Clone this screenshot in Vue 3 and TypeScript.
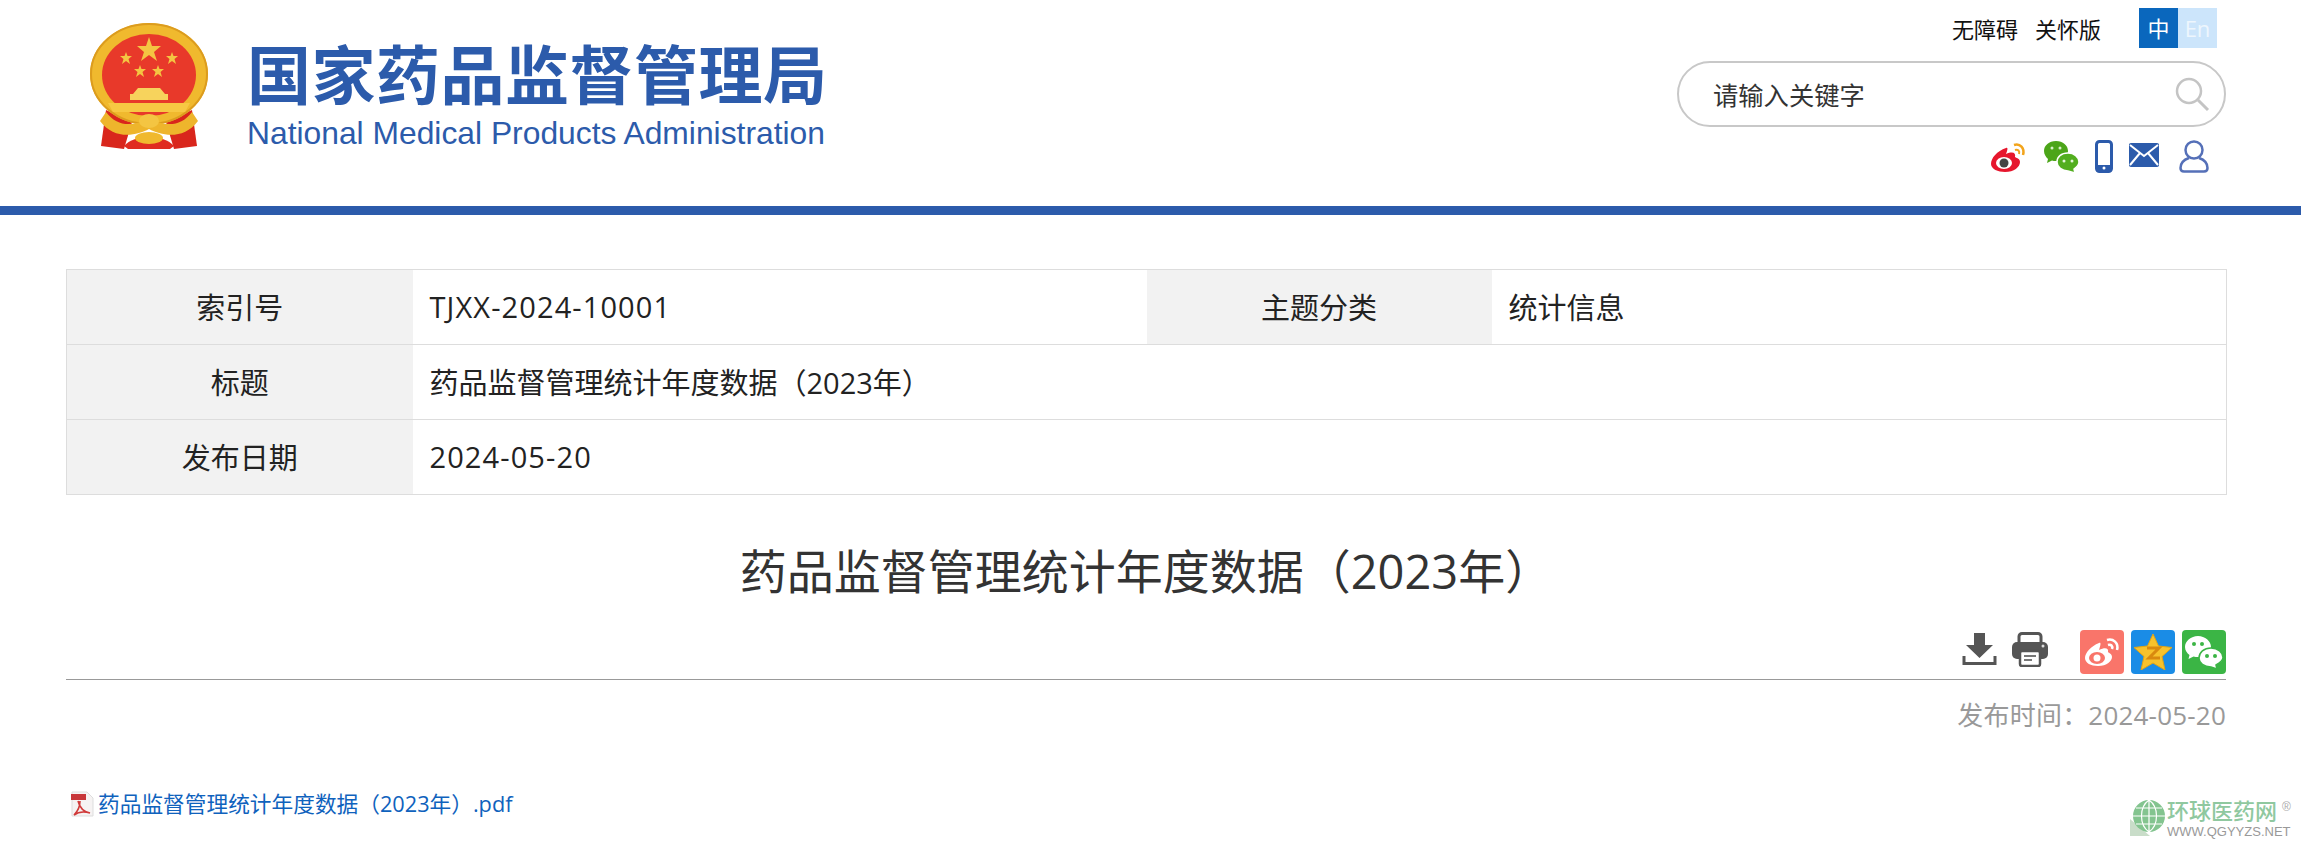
<script setup lang="ts">
const meta = [
  { label: '索引号', value: 'TJXX-2024-10001', label2: '主题分类', value2: '统计信息', latin: true },
  { label: '标题', value: '药品监督管理统计年度数据（2023年）' },
  { label: '发布日期', value: '2024-05-20', latin: true },
];
const title = '药品监督管理统计年度数据（2023年）';
</script>

<template>
  <div class="page">
    <header class="top">
      <svg class="emblem" width="120" height="128" viewBox="0 0 120 128">
        <path d="M18 88 L13 124 L36 127 L44 100Z" fill="#d9261c" />
        <path d="M104 88 L109 124 L86 127 L78 100Z" fill="#d9261c" />
        <ellipse cx="61" cy="52" rx="59" ry="51" fill="#f0b92e" />
        <ellipse cx="61" cy="52" rx="58" ry="50" fill="none" stroke="#dc9c1e" stroke-width="2" />
        <ellipse cx="61" cy="53" rx="47" ry="41" fill="#e8392a" />
        <polygon points="61,15 64,24 73,24 66,30 69,39 61,33 53,39 56,30 49,24 58,24" fill="#f4c542" />
        <polygon points="38,30 39.500,34 44,34 40.500,37 42,42 38,39 34,42 35.500,37 32,34 36.500,34" fill="#f4c542" />
        <polygon points="84,30 85.500,34 90,34 86.500,37 88,42 84,39 80,42 81.500,37 78,34 82.500,34" fill="#f4c542" />
        <polygon points="52,43 53.500,47 58,47 54.500,50 56,55 52,52 48,55 49.500,50 46,47 50.500,47" fill="#f4c542" />
        <polygon points="70,43 71.500,47 76,47 72.500,50 74,55 70,52 66,55 67.500,50 64,47 68.500,47" fill="#f4c542" />
        <path d="M50 66 H72 L77 72 H80 V78 H42 V72 H45Z" fill="#f7d35c" />
        <path d="M20 81 H102 L97 90 H25Z" fill="#f7c843" />
        <path d="M18 90 C30 106 46 104 61 96 C76 104 92 106 104 90 L110 99 C96 118 74 114 61 107 C48 114 26 118 12 99Z" fill="#eeb52c" />
        <ellipse cx="61" cy="99" rx="10" ry="7" fill="#f4c542" />
        <path d="M36 124 C46 112 76 112 86 124 L82 127 H40Z" fill="#e02c20" />
        <ellipse cx="61" cy="116" rx="14" ry="6" fill="#f0b92e" />
      </svg>
      <div class="brand">
        <div class="brand-cn">国家药品监督管理局</div>
        <div class="brand-en">National Medical Products Administration</div>
      </div>
      <div class="tools">
        <div class="links">
          <a>无障碍</a>
          <a>关怀版</a>
          <div class="lang">
            <span class="zh">中</span>
            <span class="en">En</span>
          </div>
        </div>
        <div class="search">
          <span class="placeholder">请输入关键字</span>
          <svg width="36" height="36" viewBox="0 0 36 36" fill="none" stroke="#c4c4c4">
            <circle cx="15" cy="15" r="12" stroke-width="2.500" />
            <path d="M24 24 L34 34" stroke-width="3" />
          </svg>
        </div>
        <div class="social">
          <svg width="38" height="33" viewBox="0 0 38 33">
            <path d="M16 8 C7 11 1 18 1 24 C1 29 8 32 15 32 C24 32 30 27 30 22 C30 18 26 18 25 17 C26 13 23 11 16 14 C18 9 18 7 16 8Z" fill="#e6162d" />
            <ellipse cx="14" cy="23" rx="8" ry="6" fill="#fff" />
            <circle cx="14" cy="23" r="4.500" fill="#444" />
            <path d="M24 5 C30 3 35 8 33 15" fill="none" stroke="#f2a41c" stroke-width="2.500" />
            <path d="M25 10 C28 9 30 11 29 14" fill="none" stroke="#f2a41c" stroke-width="2" />
          </svg>
          <svg width="35" height="33" viewBox="0 0 35 33">
            <path d="M12 1 C5 1 0 5.500 0 11 C0 14.500 2 17 4 19 L3 23 L8 20.500 C9 21 10.500 21 12 21 C20 21 24 16 24 11 C24 5.500 19 1 12 1Z" fill="#4ca519" />
            <path d="M24 13 C17 13 13 17 13 22 C13 27 18 31 24 31 L31 33 L30 29 C33 27 35 25 35 22 C35 17 30 13 24 13Z" fill="#52ae1f" stroke="#fff" stroke-width="1.500" />
            <circle cx="8" cy="8" r="1.500" fill="#d8f0c8" /><circle cx="16" cy="8" r="1.500" fill="#d8f0c8" />
            <circle cx="20" cy="21" r="1.500" fill="#e2f5d8" /><circle cx="28" cy="21" r="1.500" fill="#e2f5d8" />
          </svg>
          <svg width="18" height="33" viewBox="0 0 18 33">
            <rect x="1.500" y="1.500" width="15" height="30" rx="3" fill="#fff" stroke="#2c5bab" stroke-width="3" />
            <rect x="1.500" y="25" width="15" height="6.500" fill="#2c5bab" />
            <circle cx="9" cy="28" r="1.500" fill="#fff" />
          </svg>
          <svg class="mail" width="30" height="24" viewBox="0 0 30 24">
            <rect width="30" height="24" rx="2" fill="#2c5bab" />
            <path d="M1 2 L15 13 L29 2 M1 22 L11 10 M29 22 L19 10" fill="none" stroke="#fff" stroke-width="2" />
          </svg>
          <svg class="user" width="30" height="33" viewBox="0 0 30 33" fill="none" stroke="#5570b8" stroke-width="2.500">
            <ellipse cx="15" cy="10" rx="8.500" ry="8.500" />
            <path d="M10 18 C4 20 1.500 24 1.500 28 C1.500 30.500 3 31.500 5 31.500 H25 C27 31.500 28.500 30.500 28.500 28 C28.500 24 26 20 20 18" />
          </svg>
        </div>
      </div>
    </header>

    <main class="body">
      <table class="meta">
        <colgroup>
          <col style="width: 346px" />
          <col style="width: 734px" />
          <col style="width: 345px" />
          <col style="width: 735px" />
        </colgroup>
        <tbody>
          <tr v-for="row in meta" :key="row.label">
            <th class="col-label">{{ row.label }}</th>
            <td :colspan="row.label2 ? 1 : 3" class="col-value" :class="{ latin: row.latin }">{{ row.value }}</td>
            <template v-if="row.label2">
              <th class="col-label">{{ row.label2 }}</th>
              <td class="col-value">{{ row.value2 }}</td>
            </template>
          </tr>
        </tbody>
      </table>

      <h1 class="title">{{ title }}</h1>

      <div class="actions">
        <svg width="35" height="34" viewBox="0 0 35 34" class="download">
          <path d="M12 1 H23 V13 H31 L17.500 26 L4 13 H12Z" fill="#555" />
          <path d="M2 24 V31.500 H33 V24" fill="none" stroke="#555" stroke-width="3" />
        </svg>
        <svg width="36" height="35" viewBox="0 0 36 35" class="print">
          <rect x="7" y="1.500" width="22" height="12" rx="3" fill="none" stroke="#555" stroke-width="3" />
          <rect y="10" width="36" height="17" rx="5" fill="#555" />
          <rect x="8" y="19" width="20" height="15" rx="2" fill="#fff" stroke="#555" stroke-width="2.500" />
          <path d="M12 24 H24 M12 28 H20" stroke="#777" stroke-width="2" />
          <circle cx="31" cy="14" r="1.500" fill="#ddd" />
        </svg>
        <div class="share weibo">
          <svg width="36" height="32" viewBox="0 0 36 32">
            <path d="M15 7 C7 10 1 17 1 22 C1 27 7 30 14 30 C23 30 28 25 28 21 C28 18 25 17 24 16 C25 12 21 11 15 14 C17 8 17 6 15 7Z" fill="#fff" />
            <ellipse cx="13" cy="22" rx="8" ry="6" fill="#f9756a" />
            <circle cx="13" cy="22" r="3.500" fill="#fff" />
            <path d="M23 4 C29 2 35 7 33 14 M24 9 C27 8 29 10 28 13" fill="none" stroke="#fff" stroke-width="2.500" />
          </svg>
        </div>
        <div class="share qzone">
          <svg width="38" height="36" viewBox="0 0 38 36">
            <polygon points="19,0 24.500,12 38,13.500 28,22.500 31,36 19,29 7,36 10,22.500 0,13.500 13.500,12" fill="#f7c22c" stroke="#e2a514" />
            <path d="M13 14 H25 L15 24 H26" fill="none" stroke="#d98a0f" stroke-width="3" />
          </svg>
        </div>
        <div class="share wechat">
          <svg width="38" height="34" viewBox="0 0 38 34">
            <path d="M13 1 C6 1 0 6 0 12 C0 15.500 2 18 4.500 20 L3.500 24 L8.500 21.500 C10 22 11.500 22 13 22 C21 22 26 17 26 12 C26 6 20 1 13 1Z" fill="#fff" />
            <path d="M26 13 C19 13 14 17.500 14 23 C14 28 19 32 26 32 L32 34 L31 30 C34.500 28 38 26 38 22.500 C38 17.500 33 13 26 13Z" fill="#fff" stroke="#3bb545" stroke-width="1.500" />
            <circle cx="9" cy="9" r="2" fill="#3bb545" /><circle cx="17" cy="9" r="2" fill="#3bb545" />
            <circle cx="22" cy="21" r="2" fill="#3bb545" /><circle cx="30" cy="21" r="2" fill="#3bb545" />
          </svg>
        </div>
      </div>

      <div class="pub-date">发布时间：2024-05-20</div>

      <div class="attachment">
        <svg width="24" height="26" viewBox="0 0 24 26">
          <path d="M2 1 H17 L23 7 V25 H2Z" fill="#f6f3f3" stroke="#ddd" />
          <rect x="1" y="3" width="15" height="6" fill="#c8373a" />
          <path d="M8 10 C10 18 14 21 20 22 C13 20 8 21 4 24 C8 20 10 15 10 10" fill="none" stroke="#d03a3a" stroke-width="1.600" />
        </svg>
        <a class="file">{{ title }}.pdf</a>
      </div>

      <div class="watermark">
        <svg width="38" height="38" viewBox="0 0 38 38">
          <path d="M2 20 V37 H22Z" fill="#c9ddc9" />
          <circle cx="21" cy="17" r="16" fill="#83c48f" />
          <path d="M5 17 H37 M8 9 H34 M8 25 H34 M21 1 V33 M21 1 C11 8 11 26 21 33 M21 1 C31 8 31 26 21 33" fill="none" stroke="#fff" stroke-width="1.200" />
        </svg>
        <div class="wm-text">
          <div class="wm-cn">环球医药网<sup>®</sup></div>
          <div class="wm-en">WWW.QGYYZS.NET</div>
        </div>
      </div>
    </main>
  </div>
</template>

<style>
body {
  background: #fff;
}
</style>

<style scoped>
.page {
  width: 2301px;
  height: 853px;
  overflow: hidden;
  position: relative;
  font-family: "Open Sans", "Noto Sans CJK SC", sans-serif;
  color: #222;
}

.top {
  height: 206px;
  border-bottom: 9px solid #2c5bab;
  display: flex;
  align-items: flex-start;
  padding: 0 75px 0 88px;
}

.emblem {
  margin-top: 22px;
  flex-shrink: 0;
}

.brand {
  margin-left: 39px;
  margin-top: 35px;
  width: 578px;
  color: #2c5bab;
}

.brand-cn {
  font-family: "Noto Sans CJK SC", sans-serif;
  font-weight: 700;
  font-size: 64px;
  line-height: 72px;
  white-space: nowrap;
  letter-spacing: 0.5px;
}

.brand-en {
  font-family: "Liberation Sans", sans-serif;
  font-size: 31.8px;
  line-height: 34px;
  margin-top: 9px;
  white-space: nowrap;
}

.tools {
  margin-left: auto;
  width: 549px;
  display: flex;
  flex-direction: column;
  align-items: flex-end;
}

.links {
  display: flex;
  align-items: center;
  font-size: 22px;
  margin-top: 8px;
  height: 40px;
  color: #111;
  padding-right: 9px;
}

.links a + a {
  margin-left: 17px;
}

.lang {
  display: flex;
  margin-left: 38px;
  height: 40px;
}

.lang span {
  width: 39px;
  line-height: 40px;
  text-align: center;
}

.zh {
  background: #0a67bd;
  color: #fff;
}

.en {
  background: #cce5fb;
  color: #eef6fd;
}

.search {
  margin-top: 13px;
  width: 549px;
  height: 66px;
  box-sizing: border-box;
  border: 2px solid #c8c8c8;
  border-radius: 33px;
  display: flex;
  align-items: center;
  justify-content: space-between;
  padding: 0 14px 0 34px;
}

.placeholder {
  font-size: 25.3px;
  color: #333;
}

.social {
  display: flex;
  align-items: flex-start;
  gap: 16px;
  margin-top: 13px;
  padding-right: 17px;
}

.mail {
  margin-top: 3px;
}

.user {
  margin-left: 4px;
}

.body {
  padding: 54px 75px 0 66px;
}

.meta {
  width: 2160px;
  border-collapse: collapse;
  table-layout: fixed;
  font-size: 29px;
  border: 1px solid #ddd;
}

.meta tr {
  height: 75px;
  border-bottom: 1px solid #ddd;
}

.meta th,
.meta td {
  box-sizing: border-box;
  padding: 0 0 2px;
}

.col-label {
  background: #f2f2f2;
  font-weight: 400;
  text-align: center;
}

.meta .col-value {
  text-align: left;
  padding-left: 17px;
}

.meta .latin {
  letter-spacing: 1.1px;
}

.title {
  margin: 43px 0 0;
  font-size: 47px;
  line-height: 66px;
  font-weight: 400;
  text-align: center;
  color: #333;
}

.actions {
  margin-top: 26px;
  height: 49px;
  border-bottom: 1px solid #999;
  display: flex;
  align-items: flex-start;
  justify-content: flex-end;
  gap: 7px;
}

.download {
  margin-top: 2px;
  margin-right: 8px;
}

.print {
  margin-top: 2px;
  margin-right: 25px;
}

.share {
  width: 44px;
  height: 44px;
  border-radius: 4px;
  display: flex;
  align-items: center;
  justify-content: center;
}

.weibo {
  background: #f9756a;
}

.qzone {
  background: #1a8ce6;
}

.wechat {
  background: #3bb545;
}

.pub-date {
  margin-top: 17px;
  text-align: right;
  font-size: 26px;
  letter-spacing: 0.2px;
  line-height: 36px;
  color: #999;
}

.attachment {
  margin-top: 56px;
  margin-left: 4px;
  display: flex;
  align-items: center;
  gap: 4px;
}

.file {
  font-size: 21.7px;
  line-height: 30px;
  color: #0f62bd;
}

.watermark {
  position: absolute;
  left: 2128px;
  top: 799px;
  display: flex;
  gap: 1px;
}

.wm-cn {
  font-family: "Liberation Sans", "Noto Sans CJK SC", sans-serif;
  font-weight: 500;
  font-size: 22px;
  line-height: 26px;
  color: #8fc89f;
  white-space: nowrap;
}

.wm-cn sup {
  font-size: 12px;
  color: #aaa;
  vertical-align: 8px;
  line-height: 0;
  margin-left: 5px;
}

.wm-en {
  font-family: "Liberation Sans", sans-serif;
  font-size: 13px;
  line-height: 13px;
  color: #999;
  white-space: nowrap;
}
</style>
